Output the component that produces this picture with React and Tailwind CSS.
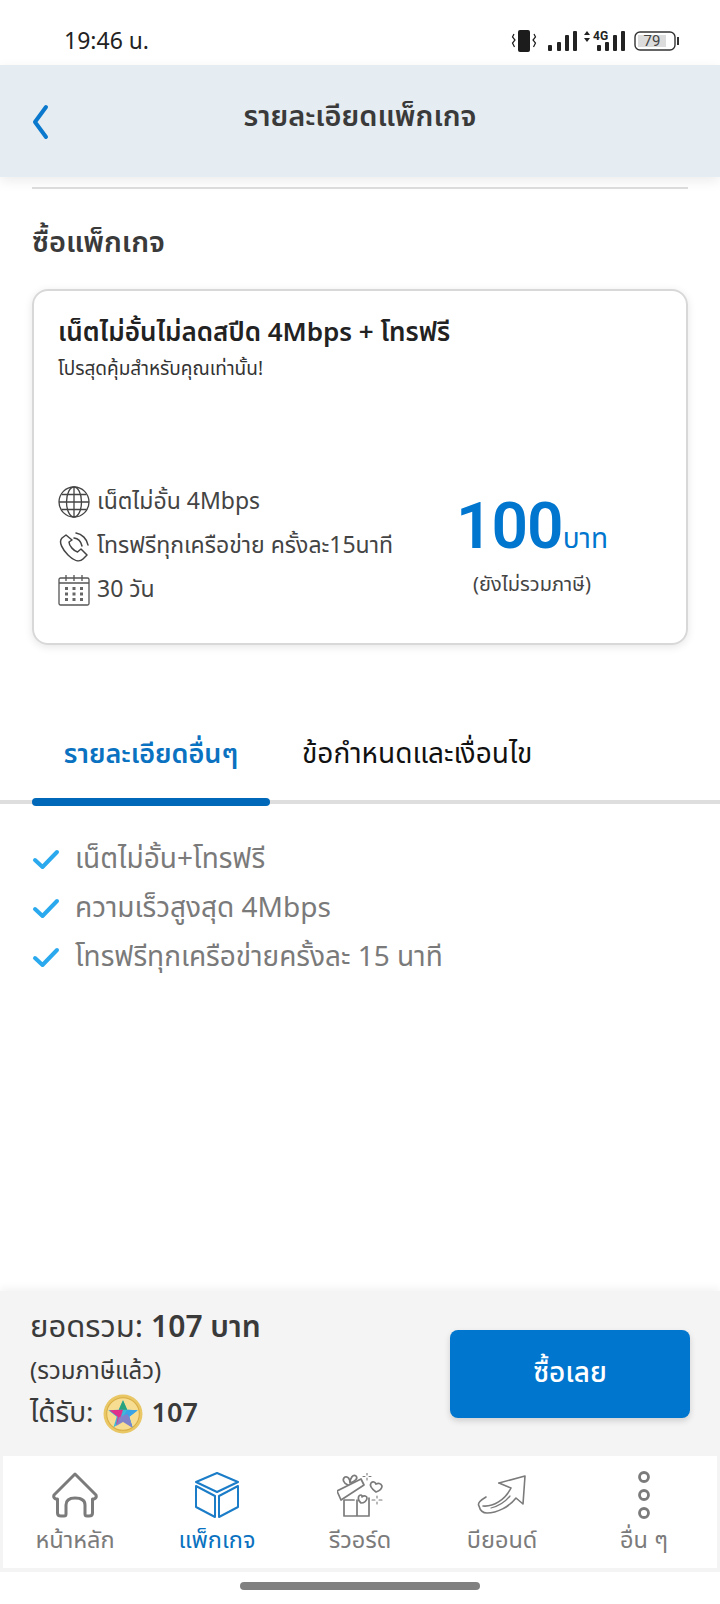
const FONT = { fontFamily: '"Noto Sans Thai", "Noto Sans", Roboto, sans-serif' };

function StatusIcons() {
  return (
    <svg width="170" height="26" viewBox="0 0 170 26">
      {/* vibrate */}
      <rect x="8" y="2" width="12" height="22" rx="2" fill="#1c1c1c" />
      <path d="M4 6l-1.500 3 2.500 3-2.500 3 2 4M24 6l1.500 3-2.500 3 2.500 3-2 4" fill="none" stroke="#1c1c1c" strokeWidth="1.2" />
      {/* signal 1 */}
      <rect x="38" y="17" width="4" height="6" rx="1" fill="#222" />
      <rect x="47" y="14" width="4" height="9" rx="1" fill="#222" />
      <rect x="55" y="7" width="4" height="16" rx="1" fill="#222" />
      <rect x="63" y="3" width="4" height="20" rx="1" fill="#222" />
      {/* signal 2 */}
      <path d="M74 7l3-4 3 4zM74 10h6l-3 4z" fill="#222" />
      <rect x="87" y="17" width="4" height="6" rx="1" fill="#222" />
      <rect x="95" y="14" width="4" height="9" rx="1" fill="#222" />
      <rect x="103" y="7" width="4" height="16" rx="1" fill="#222" />
      <rect x="111" y="3" width="4" height="20" rx="1" fill="#222" />
      <text x="83" y="12" fontSize="12" fontWeight="700" fill="#222" fontFamily="Roboto, sans-serif">4G</text>
      {/* battery */}
      <rect x="125" y="4" width="40" height="18" rx="5" fill="none" stroke="#333" strokeWidth="1.400" />
      <rect x="128" y="7" width="28" height="12" fill="#dcdcdc" />
      <rect x="167" y="9" width="2" height="8" fill="#333" />
      <text x="142" y="18" fontSize="15" textAnchor="middle" fill="#444" fontFamily="Roboto, sans-serif">79</text>
    </svg>
  );
}

function Globe() {
  return (
    <svg width="32" height="32" viewBox="0 0 32 32" fill="none" stroke="#444" strokeWidth="1.300" className="shrink-0">
      <circle cx="16" cy="16" r="15" />
      <ellipse cx="16" cy="16" rx="7.500" ry="15" />
      <path d="M16 1v30M1 16h30M3.500 8.500h25M3.500 23.500h25" />
    </svg>
  );
}

function Phone() {
  return (
    <svg width="32" height="32" viewBox="0 0 32 32" fill="none" stroke="#444" strokeWidth="1.500" className="shrink-0">
      <path d="M8 5 L4 8 C0 12 5 20 10 25 C15 30 21 33 25 29 L29 25 L23 19 L19.500 22 C16 21 11 16 11 12 L14 10 Z" strokeLinejoin="round" />
      <path d="M16 8c4 .5 7 3.500 8 8M18 3c6 1 11 6 12 12" strokeLinecap="round" />
    </svg>
  );
}

function Calendar() {
  return (
    <svg width="32" height="32" viewBox="0 0 32 32" fill="none" className="shrink-0">
      <rect x="1" y="4" width="30" height="27" rx="1.500" stroke="#555" strokeWidth="1.300" />
      <path d="M1 9h30M8 1v6M16 1v6M24 1v6" stroke="#555" strokeWidth="1.300" />
      <path d="M7 13h3v3H7zM14.500 13h3v3h-3zM22 13h3v3h-3zM7 18.500h3v3H7zM14.500 18.500h3v3h-3zM22 18.500h3v3h-3zM7 24h3v3H7zM14.500 24h3v3h-3zM22 24h3v3h-3z" fill="#666" />
    </svg>
  );
}

function Check() {
  return (
    <svg width="28" height="22" viewBox="0 0 28 22" fill="none" stroke="#2aa9ee" strokeWidth="4" strokeLinecap="round" strokeLinejoin="round" className="shrink-0">
      <path d="M3 11l7.500 7L25 3" />
    </svg>
  );
}

function Coin() {
  return (
    <svg width="40" height="40" viewBox="0 0 38 38" className="shrink-0">
      <circle cx="19" cy="19" r="18.500" fill="#e9c765" />
      <circle cx="19" cy="19" r="15.500" fill="#f6dd92" stroke="#d9ad44" strokeWidth="1" />
      <path d="M19 6l4 9 10 .5-8 6 3 10-9-5.500-9 5.500 3-10-8-6 10-.5z" fill="#3db8d8" />
      <path d="M19 6l4 9H15z" fill="#2aa37c" />
      <path d="M6 15.500L19 15l-4 13-2.500 1 1.500-7.500z" fill="#e0308a" />
      <path d="M15 28l8-13 10 .5-8 6 3 10-9-5.500z" fill="#3aa3e5" />
      <path d="M15 22l8-3 2 3 3 10-9-5.500-6.500 4z" fill="#8a7fc7" opacity="0.9" />
    </svg>
  );
}

function HomeIcon() {
  return (
    <svg width="48" height="46" viewBox="0 0 48 46" fill="none" stroke="#7b7b7b" strokeWidth="3" strokeLinejoin="round">
      <path d="M24 2 L45 23 Q46 26 43 27 L41.500 27 V41 Q41.500 44 38 44 H36 Q34 44 34 42 V33 Q34 26 24 26 Q15 26 15 33 V42 Q15 44 13 44 H10 Q6.500 44 6.500 41 V27 L5 27 Q2 26 3 23 Z" />
    </svg>
  );
}

function BoxIcon() {
  return (
    <svg width="46" height="46" viewBox="0 0 46 46" fill="none" stroke="#1b7cc8" strokeWidth="2" strokeLinejoin="round">
      <path d="M23 1L44 10 23 20 2 10z" />
      <path d="M2 14l19 10v21L2 35z" />
      <path d="M44 14L25 24v21l19-10z" />
    </svg>
  );
}

function GiftIcon() {
  return (
    <svg width="46" height="44" viewBox="0 0 46 44" fill="none" stroke="#7b7b7b" strokeWidth="1.700" strokeLinejoin="round" strokeLinecap="round">
      <path d="M7 27v16h25V25M20 27v16M7 27h10" />
      <path d="M0 18L24 6l3 6L4 27z" />
      <path d="M11 12C6 10 5 6 8 4c3-1 5 2 5 6M13 10c0-5 3-9 6-7 2 2 0 5-6 7" />
      <path d="M24 30c-4-3-3-8 0-8 1 0 1 1 1 2 2-2 5-1 5 1 0 3-3 5-6 5z" />
      <path d="M39 19c-4-3-7-6-5-9 2-2 4-1 5 1 2-1 5-1 6 2 0 3-3 5-6 6z" />
      <path d="M30 0v2M30 5v2M26 3.500h2M32 3.500h2M40 23v2M40 29v2M35 27h3M42 27h3" strokeWidth="1.100" />
    </svg>
  );
}

function ArrowIcon() {
  return (
    <svg width="50" height="42" viewBox="0 0 50 42" fill="none" stroke="#7b7b7b" strokeWidth="1.600" strokeLinecap="round" strokeLinejoin="round">
      <path d="M22 9L48 2 46 30 39 24C32 33 20 39 10 39 5 39 3 36 2 32 0 29 4 26 9 23" />
      <path d="M6 32C16 33 28 26 34 14L22 9" />
      <path d="M14 34C22 32 28 28 33 22" strokeWidth="1.200" />
    </svg>
  );
}

function DotsIcon() {
  return (
    <svg width="16" height="50" viewBox="0 0 16 50" fill="none" stroke="#7b7b7b" strokeWidth="2.800">
      <circle cx="8" cy="7" r="4.500" />
      <circle cx="8" cy="25" r="4.500" />
      <circle cx="8" cy="43" r="4.500" />
    </svg>
  );
}

const NAV = [
  { label: 'หน้าหลัก', icon: <HomeIcon />, width: 'w-[144px]' },
  { label: 'แพ็กเกจ', icon: <BoxIcon />, active: true, width: 'w-[140px]' },
  { label: 'รีวอร์ด', icon: <GiftIcon />, width: 'w-[146px]' },
  { label: 'บียอนด์', icon: <ArrowIcon />, width: 'w-[138px]' },
  { label: 'อื่น ๆ', icon: <DotsIcon />, width: 'w-[146px]' },
];

const POINTS = ['เน็ตไม่อั้น+โทรฟรี', 'ความเร็วสูงสุด 4Mbps', 'โทรฟรีทุกเครือข่ายครั้งละ 15 นาที'];

export default function App() {
  return (
    <div className="w-[720px] h-[1604px] flex flex-col bg-white overflow-hidden" style={FONT}>
      {/* status bar */}
      <div className="h-[65px] shrink-0 flex items-center justify-between pl-[64px] pr-[40px] pt-[17px]">
        <span className="text-[23px] leading-none text-[#222] mt-[3px]">19:46 น.</span>
        <StatusIcons />
      </div>

      {/* header */}
      <div className="h-[112px] shrink-0 bg-[#e5ecf2] flex items-center relative shadow-[0_4px_12px_rgba(0,0,0,0.08)] pb-[8px]">
        <svg width="20" height="36" viewBox="0 0 20 36" fill="none" stroke="#0a78cc" strokeWidth="4" strokeLinecap="round" strokeLinejoin="round" className="ml-[31px] mt-[10px]">
          <path d="M15 3L4 18l11 15" />
        </svg>
        <h1 className="flex-1 text-center pr-[51px] text-[29px] font-semibold text-[#3a3a3a] leading-none">รายละเอียดแพ็กเกจ</h1>
      </div>

      {/* content */}
      <div className="px-[32px] pt-[10px]">
        <div className="h-[2px] bg-[#dedede]" />
        <h2 className="mt-[33px] text-[29px] leading-[42px] font-semibold text-[#3a3a3a]">ซื้อแพ็กเกจ</h2>
        <div className="mt-[25px] h-[356px] rounded-[16px] border-2 border-[#d8d8d8] shadow-[0_2px_8px_rgba(0,0,0,0.1)] pl-[24px] pr-[24px] pt-[23px] flex flex-col">
          <div className="text-[26px] leading-[38px] font-semibold text-[#222]">เน็ตไม่อั้นไม่ลดสปีด 4Mbps + โทรฟรี</div>
          <div className="mt-[4px] text-[19px] leading-[28px] text-[#333]">โปรสุดคุ้มสำหรับคุณเท่านั้น!</div>
          <div className="mt-[102px] flex justify-between">
            <div className="flex flex-col gap-[12px]">
              <div className="flex items-center gap-[7px] h-[32px] text-[23px] text-[#444]"><Globe />เน็ตไม่อั้น 4Mbps</div>
              <div className="flex items-center gap-[7px] h-[32px] text-[23px] text-[#444]"><Phone />โทรฟรีทุกเครือข่าย ครั้งละ15นาที</div>
              <div className="flex items-center gap-[7px] h-[32px] text-[23px] text-[#444]"><Calendar />30 วัน</div>
            </div>
            <div className="w-[200px] mr-[30px] mt-[5px] flex flex-col items-center">
              <div className="flex items-baseline h-[72px]">
                <span className="text-[64px] font-semibold text-[#0076cf] leading-[72px] tracking-[-1px]" style={{ fontFamily: 'Roboto, sans-serif' }}>100</span>
                <span className="text-[28px] leading-[28px] text-[#0076cf]">บาท</span>
              </div>
              <div className="mt-[8px] text-[20px] leading-[28px] text-[#444]">(ยังไม่รวมภาษี)</div>
            </div>
          </div>
        </div>
      </div>

      {/* tabs */}
      <div className="mt-[96px] border-b-[4px] border-[#dedede] flex h-[63px] pl-[32px]">
        <div className="w-[238px] h-[65px] shrink-0 flex flex-col justify-between text-center text-[27px] font-semibold text-[#0a72c0] leading-[28px]">
          <span>รายละเอียดอื่นๆ</span>
          <div className="h-[8px] rounded-[4px] bg-[#0068b8]" />
        </div>
        <div className="ml-[32px] text-[28px] text-[#111] leading-[28px]">ข้อกำหนดและเงื่อนไข</div>
      </div>

      {/* list */}
      <div className="pl-[32px] pt-[38px] flex flex-col gap-[13px] flex-1">
        {POINTS.map((point) => (
          <div key={point} className="flex items-center gap-[15px] h-[36px] text-[28px] text-[#7a7a7a]">
            <Check />
            {point}
          </div>
        ))}
      </div>

      {/* summary */}
      <div className="h-[165px] shrink-0 bg-[#f4f4f4] shadow-[0_-3px_8px_rgba(0,0,0,0.05)] flex items-center justify-between pl-[30px] pr-[30px]">
        <div className="flex flex-col pb-[6px]">
          <div className="text-[31px] leading-[46px] text-[#3a3a3a]">ยอดรวม: <span className="font-semibold text-[30px]">107 บาท</span></div>
          <div className="mt-[2px] text-[24px] leading-[38px] text-[#3a3a3a]">(รวมภาษีแล้ว)</div>
          <div className="flex items-center gap-[9px] text-[28px] leading-[46px] text-[#3a3a3a]">
            ได้รับ: <Coin /><span className="font-semibold text-[27px]">107</span>
          </div>
        </div>
        <button className="w-[240px] h-[88px] rounded-[8px] bg-[#0076cf] text-white text-[28px] font-medium shadow-[0_3px_6px_rgba(0,0,0,0.15)]">ซื้อเลย</button>
      </div>

      {/* nav */}
      <div className="shrink-0 bg-[#f4f4f4] px-[3px] pb-[4px]">
        <div className="h-[112px] bg-white flex">
          {NAV.map((item) => (
            <div key={item.label} className={`${item.width} flex flex-col items-center pt-[14px]`}>
              <div className="h-[50px] flex items-center justify-center">{item.icon}</div>
              <div className={`mt-[6px] text-[23.5px] leading-[30px] ${item.active ? 'text-[#0a72c0]' : 'text-[#7b7b7b]'}`}>{item.label}</div>
            </div>
          ))}
        </div>
      </div>

      {/* home indicator */}
      <div className="h-[32px] shrink-0 flex items-start justify-center pt-[10px]">
        <div className="w-[240px] h-[8px] rounded-full bg-[#808080]" />
      </div>
    </div>
  );
}
